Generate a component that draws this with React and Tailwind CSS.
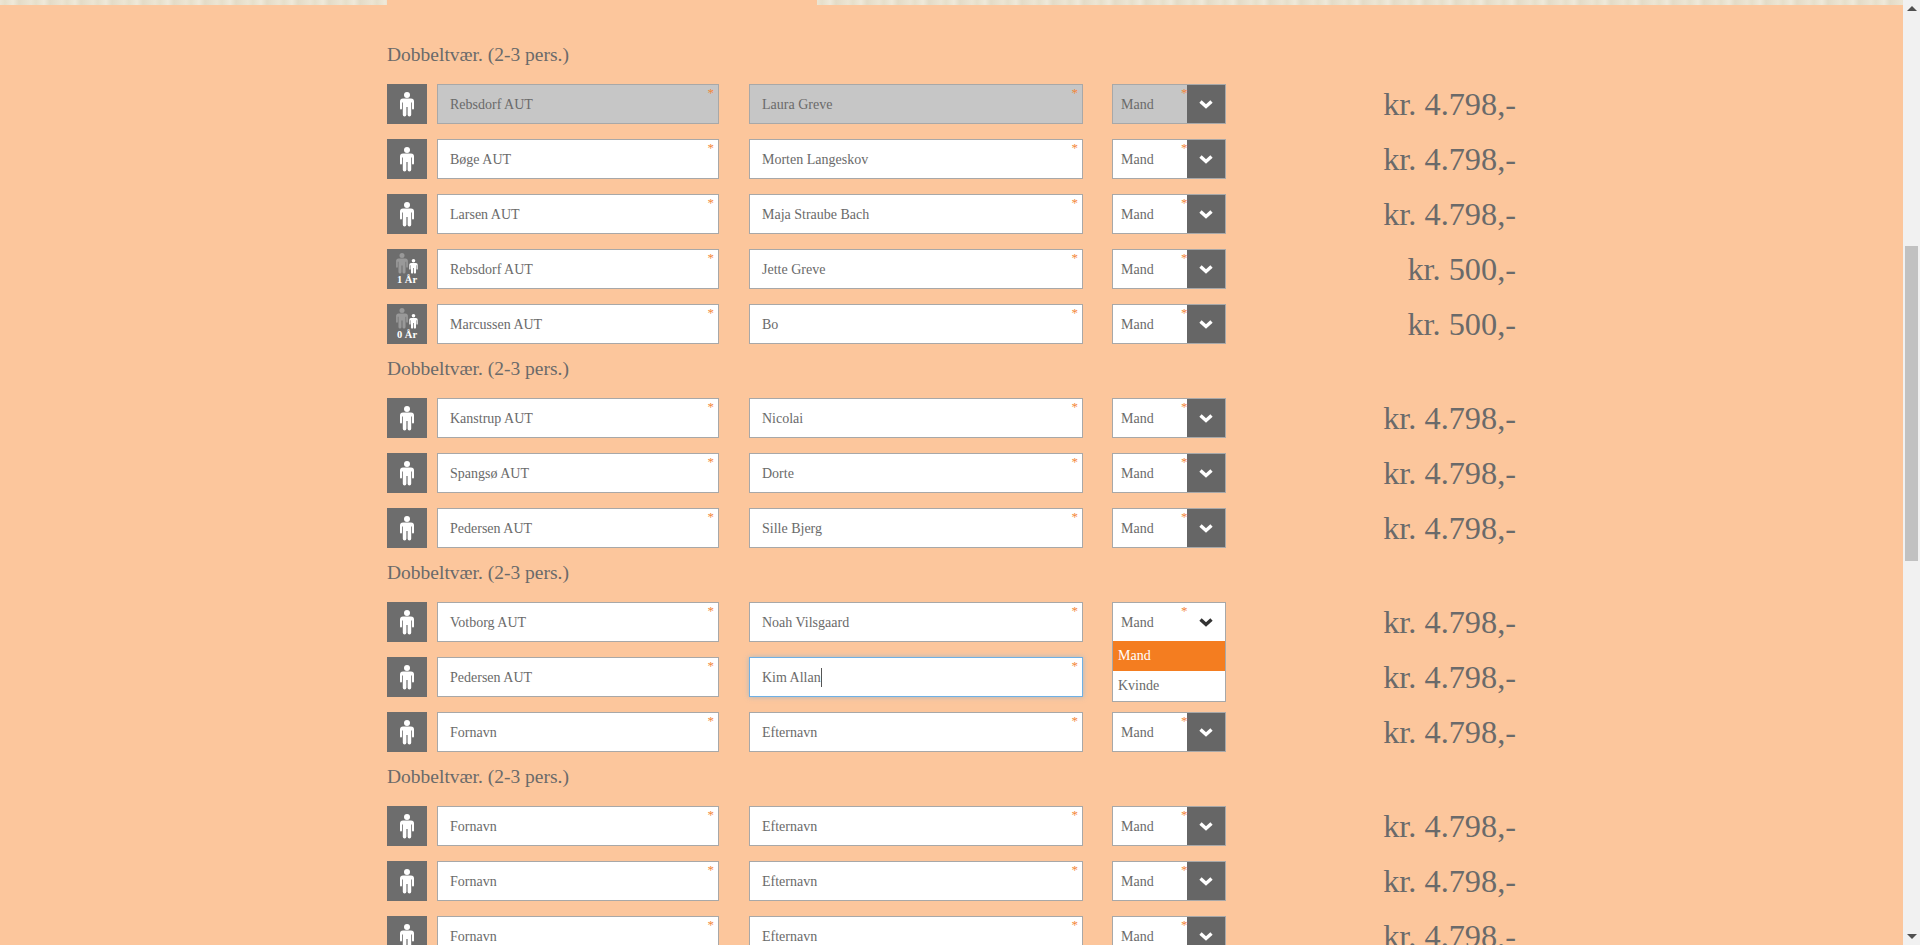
import { useState } from 'react';

const groups = [
  [
    { first: 'Rebsdorf AUT', last: 'Laura Greve', price: 'kr. 4.798,-', disabled: true },
    { first: 'Bøge AUT', last: 'Morten Langeskov', price: 'kr. 4.798,-' },
    { first: 'Larsen AUT', last: 'Maja Straube Bach', price: 'kr. 4.798,-' },
    { first: 'Rebsdorf AUT', last: 'Jette Greve', price: 'kr. 500,-', age: '1 År' },
    { first: 'Marcussen AUT', last: 'Bo', price: 'kr. 500,-', age: '0 År' },
  ],
  [
    { first: 'Kanstrup AUT', last: 'Nicolai', price: 'kr. 4.798,-' },
    { first: 'Spangsø AUT', last: 'Dorte', price: 'kr. 4.798,-' },
    { first: 'Pedersen AUT', last: 'Sille Bjerg', price: 'kr. 4.798,-' },
  ],
  [
    { first: 'Votborg AUT', last: 'Noah Vilsgaard', price: 'kr. 4.798,-', open: true },
    { first: 'Pedersen AUT', last: 'Kim Allan', price: 'kr. 4.798,-', focused: true },
    { first: 'Fornavn', last: 'Efternavn', price: 'kr. 4.798,-' },
  ],
  [
    { first: 'Fornavn', last: 'Efternavn', price: 'kr. 4.798,-' },
    { first: 'Fornavn', last: 'Efternavn', price: 'kr. 4.798,-' },
    { first: 'Fornavn', last: 'Efternavn', price: 'kr. 4.798,-' },
  ],
];

function Person({ className }) {
  return (
    <svg viewBox="0 0 14 25" className={className} fill="currentColor">
      <circle cx="7" cy="3" r="3" />
      <path d="M3 6.5H11A3 3 0 0 1 14 9.5V16.5A1 1 0 0 1 12 16.5V10.5H11.2V22.7A1.8 1.8 0 0 1 7.6 22.7V15H6.4V22.7A1.8 1.8 0 0 1 2.8 22.7V10.5H2V16.5A1 1 0 0 1 0 16.5V9.5A3 3 0 0 1 3 6.5Z" />
    </svg>
  );
}

function Chevron({ className }) {
  return (
    <svg viewBox="0 0 14 9" className={`w-[14px] h-[9px] ${className}`} fill="none" stroke="currentColor" strokeWidth="3.4">
      <polyline points="1.5,1.5 7,6.5 12.5,1.5" />
    </svg>
  );
}

function TextField({ width, value, disabled, focused }) {
  return (
    <div
      className={`relative flex items-center h-10 pl-[12px] border ${width} ${disabled ? 'bg-[#c6c6c6]' : 'bg-white'} ${focused ? 'border-[#6fb0e4] shadow-[0_0_5px_rgba(111,176,228,0.6)]' : 'border-[#a8a8a8]'}`}
    >
      <span>{value}</span>
      {focused && <span className="w-px h-[19px] bg-[#555]" />}
      <span className="absolute top-[1px] right-[4px] text-[13px] leading-[13px] text-[#f4873a]">*</span>
    </div>
  );
}

function GenderSelect({ disabled, open }) {
  return (
    <div className={`relative flex items-center justify-between w-[114px] h-10 border border-[#a8a8a8] ${disabled ? 'bg-[#c6c6c6]' : 'bg-white'}`}>
      <span className="pl-[8px]">Mand</span>
      <span className="absolute top-[1px] left-[68px] text-[13px] leading-[13px] text-[#f4873a]">*</span>
      <div className={`flex items-center justify-center w-[38px] h-full ${open ? 'text-[#333]' : 'bg-[#666] text-white'}`}>
        <Chevron />
      </div>
      {open && (
        <div className="absolute z-10 top-[38px] -left-[1px] w-[114px] bg-white border border-t-0 border-[#a8a8a8]">
          <div className="h-[30px] leading-[30px] pl-[5px] bg-[#f47d20] text-white">Mand</div>
          <div className="h-[30px] leading-[30px] pl-[5px]">Kvinde</div>
        </div>
      )}
    </div>
  );
}

function GuestIcon({ age }) {
  if (age) {
    return (
      <div className="shrink-0 flex flex-col items-center w-10 h-10 pt-[4px] bg-[#6d6d6d] text-white">
        <div className="flex items-end gap-[1px] h-[21px] text-[#999]">
          <Person className="w-[12px] h-[21px]" />
          <Person className="w-[9px] h-[15px] text-white" />
        </div>
        <span className="text-[10.5px] leading-[12px] font-bold">{age}</span>
      </div>
    );
  }
  return (
    <div className="shrink-0 flex items-center justify-center w-10 h-10 bg-[#6d6d6d] text-white">
      <Person className="w-[14px] h-[25px]" />
    </div>
  );
}

function GuestRow({ guest }) {
  return (
    <div className="flex items-center h-10 mb-[15px]">
      <GuestIcon age={guest.age} />
      <div className="ml-[10px]">
        <TextField width="w-[282px]" value={guest.first} disabled={guest.disabled} />
      </div>
      <div className="ml-[30px]">
        <TextField width="w-[334px]" value={guest.last} disabled={guest.disabled} focused={guest.focused} />
      </div>
      <div className="ml-[29px]">
        <GenderSelect disabled={guest.disabled} open={guest.open} />
      </div>
      <div className="flex-1 text-right text-[32.3px] leading-10">{guest.price}</div>
    </div>
  );
}

export default function App() {
  const [rooms] = useState(groups);
  const strip = 'bg-[repeating-linear-gradient(90deg,#ece5d3_0px,#e6dfca_5px,#efe9d9_13px,#e3dbc6_19px,#ece5d3_31px)]';

  return (
    <div className="flex h-[945px] overflow-hidden bg-[#fcc69c] text-[#6a6a6a] text-[14px] font-['Liberation_Serif',serif]">
      <div className="flex-1">
        {/* top texture strip with the active tab cut out */}
        <div className="flex h-[5px]">
          <div className={`w-[387px] ${strip}`} />
          <div className="w-[430px]" />
          <div className={`flex-1 ${strip}`} />
        </div>

        <div className="w-[1129px] ml-[387px] pt-10">
          {rooms.map((room, i) => (
            <section key={i}>
              <h2 className="h-5 mb-[19px] text-[19.5px] leading-5">Dobbeltvær. (2-3 pers.)</h2>
              {room.map((guest, j) => (
                <GuestRow key={j} guest={guest} />
              ))}
            </section>
          ))}
        </div>
      </div>

      {/* scrollbar */}
      <div className="flex flex-col items-center w-[17px] h-full py-[6px] bg-[#f1f1f1]">
        <div className="w-0 h-0 border-x-[5px] border-x-transparent border-b-[5px] border-b-[#505050]" />
        <div className="w-[13px] h-[315px] mt-[235px] bg-[#c1c1c1]" />
        <div className="mt-auto w-0 h-0 border-x-[5px] border-x-transparent border-t-[5px] border-t-[#505050]" />
      </div>
    </div>
  );
}
